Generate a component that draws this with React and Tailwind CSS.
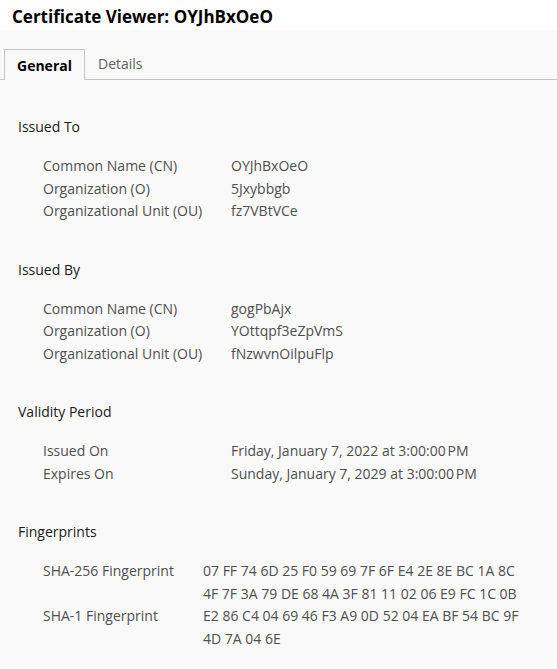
import React from "react";

const sections = [
  {
    title: "Issued To",
    col: "grid-cols-[188px_1fr]",
    rows: [
      ["Common Name (CN)", "OYJhBxOeO"],
      ["Organization (O)", "5Jxybbgb"],
      ["Organizational Unit (OU)", "fz7VBtVCe"],
    ],
  },
  {
    title: "Issued By",
    col: "grid-cols-[188px_1fr]",
    rows: [
      ["Common Name (CN)", "gogPbAjx"],
      ["Organization (O)", "YOttqpf3eZpVmS"],
      ["Organizational Unit (OU)", "fNzwvnOilpuFlp"],
    ],
  },
  {
    title: "Validity Period",
    col: "grid-cols-[188px_1fr]",
    rows: [
      ["Issued On", "Friday, January 7, 2022 at 3:00:00\u202fPM"],
      ["Expires On", "Sunday, January 7, 2029 at 3:00:00\u202fPM"],
    ],
  },
  {
    title: "Fingerprints",
    col: "grid-cols-[160px_1fr]",
    rows: [
      ["SHA-256 Fingerprint", ["07 FF 74 6D 25 F0 59 69 7F 6F E4 2E 8E BC 1A 8C", "4F 7F 3A 79 DE 68 4A 3F 81 11 02 06 E9 FC 1C 0B"]],
      ["SHA-1 Fingerprint", ["E2 86 C4 04 69 46 F3 A9 0D 52 04 EA BF 54 BC 9F", "4D 7A 04 6E"]],
    ],
  },
];

export default function App() {
  return (
    <div className="min-h-screen bg-[#f9f9f9] text-[14px] font-['Open_Sans','Noto_Sans',sans-serif]">
      {/* title bar */}
      <div className="bg-white h-[30px] px-[12px] pt-[7px] text-[17px] leading-[20px] font-bold text-black">
        Certificate Viewer: OYJhBxOeO
      </div>

      {/* tabs */}
      <div className="flex items-end pt-[18px] pl-[4px] border-b border-[#c4c4c4]">
        <div className="h-[31px] px-[12px] border border-b-0 border-[#c4c4c4] font-bold text-black leading-[31px] -mb-px bg-[#f9f9f9]">
          General
        </div>
        <div className="h-[31px] px-[13px] leading-[31px] text-[#606060]">Details</div>
      </div>

      {/* content */}
      <div className="px-[18px] pb-4">
        {sections.map((s) => (
          <div key={s.title} className="pt-[36px]">
            <div className="leading-[22px] text-[#1a1a1a]">{s.title}</div>
            <div className={"grid mt-[17px] pl-[25px] leading-[22.5px] text-[#4f4f4f] " + s.col}>
              {s.rows.map(([label, value]) => (
                <React.Fragment key={label}>
                  <div>{label}</div>
                  <div>
                    {Array.isArray(value)
                      ? value.map((line) => <div key={line}>{line}</div>)
                      : value}
                  </div>
                </React.Fragment>
              ))}
            </div>
          </div>
        ))}
      </div>
    </div>
  );
}
